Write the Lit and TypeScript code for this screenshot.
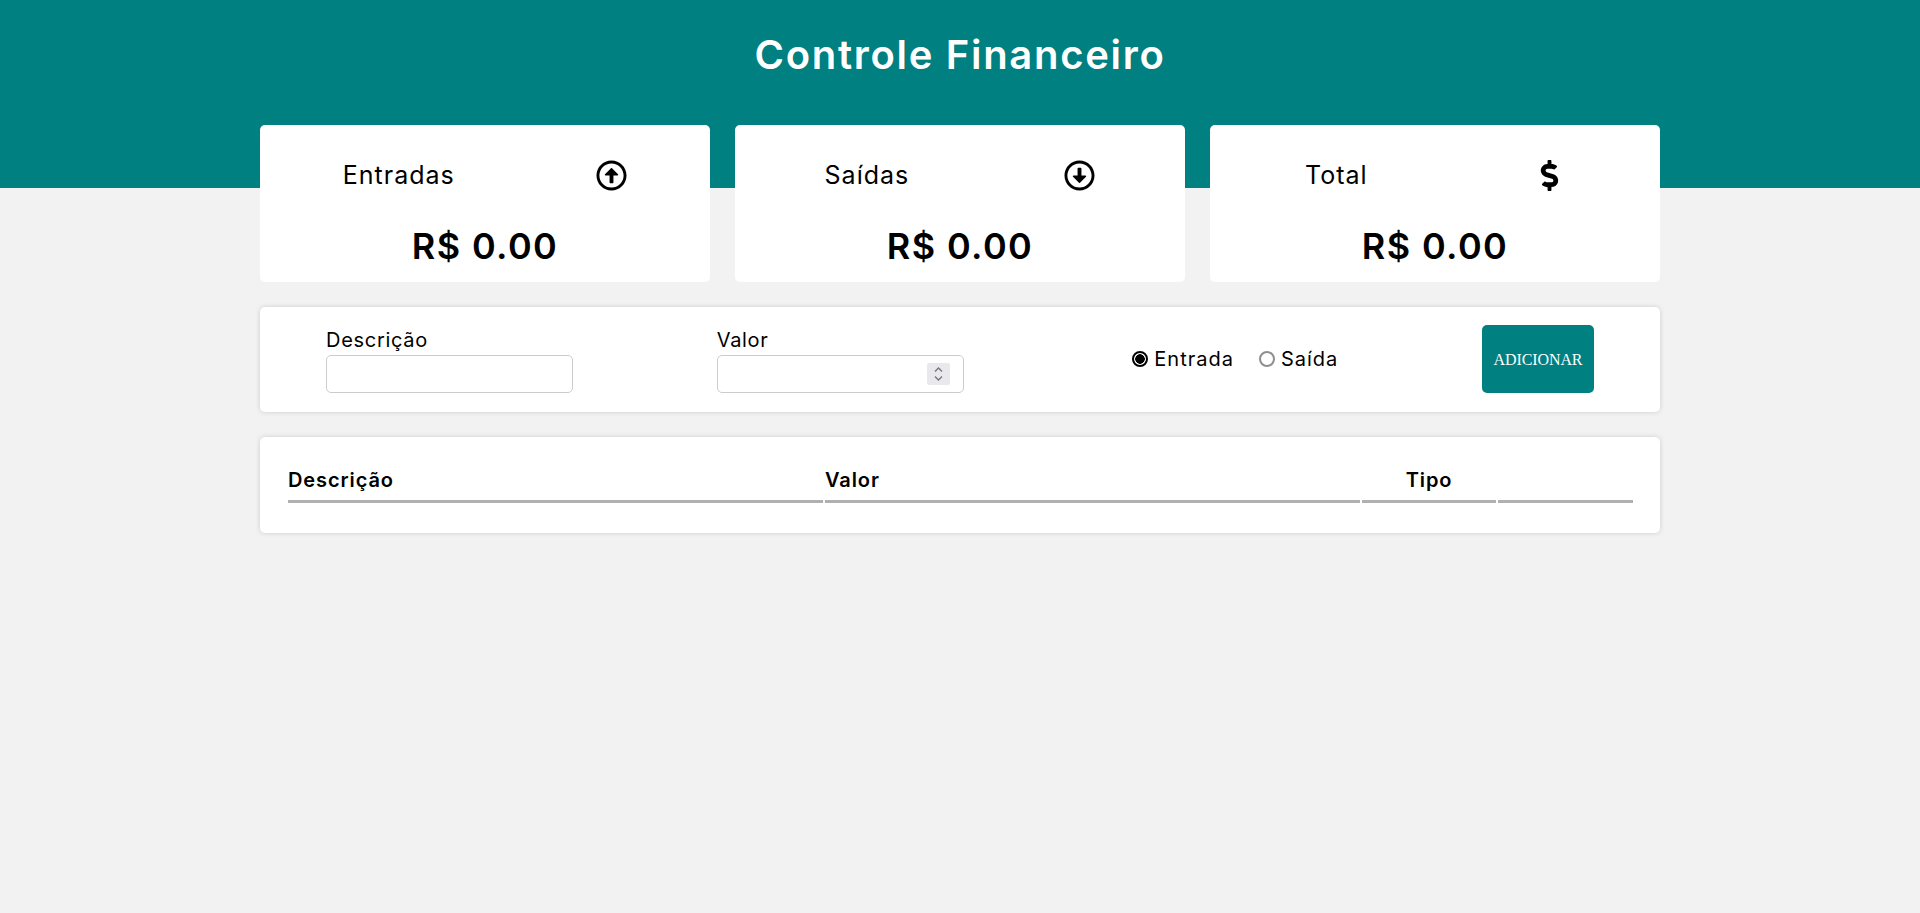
import { LitElement, html, css, svg } from "lit";
import { customElement } from "lit/decorators.js";

const upIcon = svg`<path d="M256 504c137 0 248-111 248-248S393 8 256 8 8 119 8 256s111 248 248 248zm0-448c110.5 0 200 89.5 200 200s-89.5 200-200 200S56 366.5 56 256 145.5 56 256 56zm20 328h-40c-6.6 0-12-5.4-12-12V256h-67c-10.7 0-16-12.9-8.5-20.5l99-99c4.7-4.7 12.3-4.7 17 0l99 99c7.6 7.6 2.2 20.5-8.5 20.5h-67v116c0 6.6-5.4 12-12 12z"/>`;
const downIcon = svg`<path d="M256 8C119 8 8 119 8 256s111 248 248 248 248-111 248-248S393 8 256 8zm0 448c-110.5 0-200-89.5-200-200S145.5 56 256 56s200 89.5 200 200-89.5 200-200 200zm-20-328h40c6.6 0 12 5.4 12 12v116h67c10.7 0 16 12.9 8.5 20.5l-99 99c-4.7 4.7-12.3 4.7-17 0l-99-99c-7.6-7.6-2.2-20.5 8.5-20.5h67V140c0-6.6 5.4-12 12-12z"/>`;
const dollarIcon = svg`<path d="M209.2 233.4l-108-31.6C88.7 198.2 80 186.5 80 173.5c0-16.3 13.2-29.5 29.5-29.5h66.3c12.2 0 24.2 3.7 34.2 10.5 6.1 4.1 14.3 3.1 19.5-2l34.8-34c7.1-6.9 6.1-18.4-1.8-24.5C238 74.8 207.4 64.1 176 64V16c0-8.8-7.2-16-16-16h-32c-8.8 0-16 7.2-16 16v48h-2.5C45.8 64-5.4 118.7.5 183.6c4.2 46.1 39.4 83.6 83.8 96.6l102.5 30c12.5 3.7 21.2 15.3 21.2 28.3 0 16.3-13.2 29.5-29.5 29.5h-66.3C100 368 88 364.3 78 357.5c-6.1-4.1-14.3-3.1-19.5 2l-34.8 34c-7.1 6.9-6.1 18.4 1.8 24.5 24.5 19.2 55.1 29.9 86.5 30v48c0 8.8 7.2 16 16 16h32c8.8 0 16-7.2 16-16v-48.2c46.6-.9 90.3-28.6 105.7-72.7 21.5-61.6-14.6-124.8-72.5-141.7z"/>`;

@customElement("app-root")
export class AppRoot extends LitElement {
  static styles = css`
    :host {
      display: block;
      min-height: 913px;
      background: #f2f2f2;
      font-family: Inter, "Liberation Sans", sans-serif;
      color: #000;
    }
    .header {
      height: 188px;
      background: #008080;
      display: flex;
      justify-content: center;
      box-sizing: border-box;
      padding-top: 29px;
    }
    h1 {
      margin: 0;
      color: #fff;
      font-size: 40px;
      line-height: 52px;
      font-weight: 600;
      letter-spacing: 1.7px;
    }
    .main {
      width: 1400px;
      margin: -63px auto 0;
      display: flex;
      flex-direction: column;
      gap: 25px;
    }
    .cards {
      display: flex;
      gap: 25px;
    }
    .card {
      flex: 1;
      height: 157px;
      box-sizing: border-box;
      background: #fff;
      border-radius: 5px;
      padding: 35px 12px 0;
    }
    .card-top {
      display: flex;
      justify-content: space-around;
      align-items: center;
      height: 30px;
      font-size: 25px;
      font-weight: 400;
      letter-spacing: 1px;
    }
    .card-top svg {
      width: 31px;
      height: 31px;
      display: block;
      fill: #000;
    }
    .amount {
      margin-top: 31px;
      text-align: center;
      font-size: 36px;
      line-height: 50px;
      font-weight: 600;
      letter-spacing: 1.4px;
    }
    .form {
      height: 105px;
      box-sizing: border-box;
      background: #fff;
      border-radius: 5px;
      box-shadow: 0 0 5px #ccc;
      padding: 18px 66px 19px;
      display: flex;
      justify-content: space-between;
      align-items: flex-end;
    }
    .field {
      display: flex;
      flex-direction: column;
      width: 247px;
      font-size: 20px;
      line-height: 30px;
      letter-spacing: 0.7px;
    }
    .control {
      position: relative;
      display: block;
      height: 38px;
    }
    .control input {
      display: block;
      box-sizing: border-box;
      width: 247px;
      height: 38px;
      border: 1px solid #ccc;
      border-radius: 5px;
      padding: 0 10px;
      font-size: 15px;
      background: #fff;
      outline: none;
      appearance: textfield;
    }
    .control input::-webkit-inner-spin-button {
      appearance: none;
    }
    .spin {
      position: absolute;
      right: 14px;
      top: 8px;
      width: 23px;
      height: 22px;
      background: #e9e9ed;
      border-radius: 2px;
      display: block;
    }
    .spin svg {
      display: block;
      width: 23px;
      height: 22px;
      fill: none;
      stroke: #767676;
      stroke-width: 1.3;
    }
    .radios {
      display: flex;
      align-items: center;
      align-self: center;
      margin-left: 25px;
      font-size: 20px;
      line-height: 30px;
      letter-spacing: 1px;
    }
    .radios label {
      display: flex;
      align-items: center;
    }
    .radios input {
      appearance: none;
      box-sizing: border-box;
      width: 16px;
      height: 16px;
      margin: 0 6px 0 0;
      border-radius: 50%;
      border: 2px solid #8f8f8f;
      background: #fff;
    }
    .radios input:checked {
      border-color: #000;
      background: radial-gradient(circle, #000 0 4.5px, #fff 5px);
    }
    .radios label + label {
      margin-left: 25px;
    }
    button {
      width: 112px;
      height: 68px;
      border: none;
      border-radius: 5px;
      background: #008080;
      color: #fff;
      font-family: "Liberation Serif", serif;
      font-size: 16px;
      letter-spacing: -0.1px;
      padding: 2px 0 0;
    }
    .list {
      height: 96px;
      box-sizing: border-box;
      background: #fff;
      border-radius: 5px;
      box-shadow: 0 0 5px #ccc;
      padding: 22px 25px 0 26px;
    }
    table {
      width: 1349px;
      border-collapse: separate;
      border-spacing: 2px 0;
      table-layout: fixed;
      font-size: 20px;
      letter-spacing: 0.9px;
    }
    th {
      height: 44px;
      box-sizing: border-box;
      padding: 0;
      text-align: left;
      font-weight: 600;
      border-bottom: 3px solid #b0b0b0;
    }
    th.wide { width: 535px; }
    th.type { width: 134px; text-align: center; }
    th.actions { width: 135px; }
  `;

  render() {
    return html`
      <div class="header"><h1>Controle Financeiro</h1></div>
      <div class="main">
        <div class="cards">
          <div class="card">
            <div class="card-top"><span>Entradas</span><svg viewBox="0 0 512 512">${upIcon}</svg></div>
            <div class="amount">R$ 0.00</div>
          </div>
          <div class="card">
            <div class="card-top"><span>Saídas</span><svg viewBox="0 0 512 512">${downIcon}</svg></div>
            <div class="amount">R$ 0.00</div>
          </div>
          <div class="card">
            <div class="card-top"><span>Total</span><svg viewBox="0 0 288 512">${dollarIcon}</svg></div>
            <div class="amount">R$ 0.00</div>
          </div>
        </div>
        <div class="form">
          <label class="field">Descrição<span class="control"><input type="text" /></span></label>
          <label class="field">Valor<span class="control"><input type="number" /><span class="spin"><svg viewBox="0 0 23 22"><path d="M8 8.5l3.5-3.5 3.5 3.5M8 13.5l3.5 3.5 3.5-3.5"/></svg></span></span></label>
          <div class="radios">
            <label><input type="radio" name="tipo" checked />Entrada</label>
            <label><input type="radio" name="tipo" />Saída</label>
          </div>
          <button>ADICIONAR</button>
        </div>
        <div class="list">
          <table>
            <thead>
              <tr>
                <th class="wide">Descrição</th>
                <th class="wide">Valor</th>
                <th class="type">Tipo</th>
                <th class="actions"></th>
              </tr>
            </thead>
          </table>
        </div>
      </div>
    `;
  }
}
